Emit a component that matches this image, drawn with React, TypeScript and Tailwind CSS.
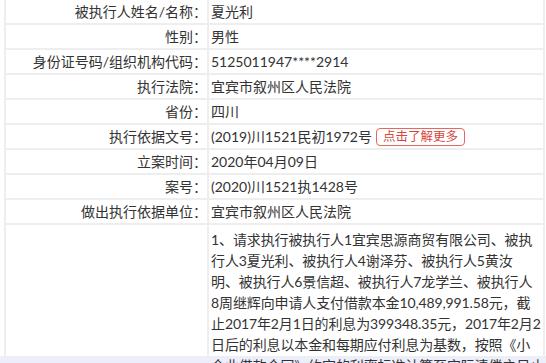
import React from 'react';

const rows: { label: string; value: React.ReactNode }[] = [
  { label: '被执行人姓名/名称：', value: '夏光利' },
  { label: '性别：', value: '男性' },
  { label: '身份证号码/组织机构代码：', value: '5125011947****2914' },
  { label: '执行法院：', value: '宜宾市叙州区人民法院' },
  { label: '省份：', value: '四川' },
  {
    label: '执行依据文号：',
    value: (
      <span className="flex items-center">
        <span>(2019)川1521民初1972号</span>
        <button className="ml-1 h-[18px] rounded-[4px] border border-[#e06a62] px-[6px] text-[12.5px] leading-[16px] text-[#d8453c]">
          点击了解更多
        </button>
      </span>
    ),
  },
  { label: '立案时间：', value: '2020年04月09日' },
  { label: '案号：', value: '(2020)川1521执1428号' },
  { label: '做出执行依据单位：', value: '宜宾市叙州区人民法院' },
];

// line breaks as they fall in the original page
const contentLines = [
  '1、请求执行被执行人1宜宾思源商贸有限公司、被执',
  '行人3夏光利、被执行人4谢泽芬、被执行人5黄汝',
  '明、被执行人6景信超、被执行人7龙学兰、被执行人',
  '8周继辉向申请人支付借款本金10,489,991.58元，截',
  '止2017年2月1日的利息为399348.35元，2017年2月2',
  '日后的利息以本金和每期应付利息为基数，按照《小',
  '企业借款合同》约定的利率标准计算至实际清偿之日止。',
];

export default function App() {
  return (
    <div
      className="flex h-[363px] w-[546px] flex-col overflow-hidden bg-white text-[14px] text-[#333]"
      style={{ fontFamily: 'Lato, "Noto Sans CJK SC", sans-serif' }}
    >
      <div className="relative z-10 min-h-0 flex-1 pl-[4px] pr-px">
        <div className="border-x-2 border-[#eeeeee]">
          {rows.map((r) => (
            <div key={r.label} className="flex h-[25px] border-b-2 border-[#eeeeee]">
              <div className="flex w-[203px] shrink-0 items-center justify-end border-r-2 border-[#eeeeee] whitespace-nowrap">
                {r.label}
              </div>
              <div className="flex flex-1 items-center pl-[2px] whitespace-nowrap">{r.value}</div>
            </div>
          ))}
          <div className="flex">
            <div className="w-[203px] shrink-0 border-r-2 border-[#eeeeee]" />
            <p className="flex-1 pl-[2px] pt-[4px] leading-[21px] tracking-[-0.12px]">
              {contentLines.map((l) => (
                <span key={l} className="block whitespace-nowrap">
                  {l}
                </span>
              ))}
            </p>
          </div>
        </div>
      </div>
      <div className="h-[7px] shrink-0 bg-[#eceefa]" />
    </div>
  );
}
